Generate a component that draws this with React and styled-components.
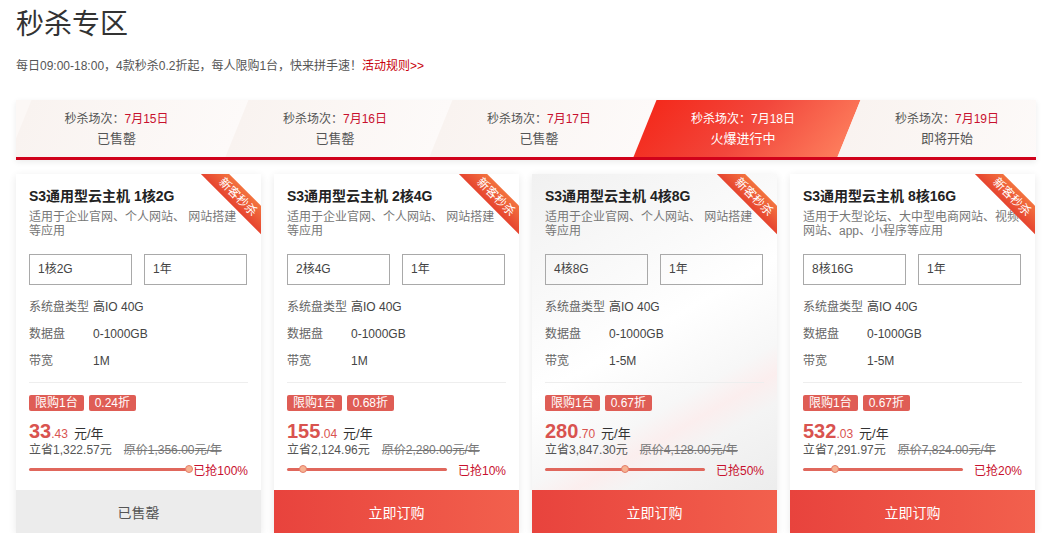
import React from 'react';
import styled, { createGlobalStyle, css } from 'styled-components';

const FONT = `"Liberation Sans", "Noto Sans CJK SC", sans-serif`;

const sessions = [
  { date: '7月15日', status: '已售罄' },
  { date: '7月16日', status: '已售罄' },
  { date: '7月17日', status: '已售罄' },
  { date: '7月18日', status: '火爆进行中', active: true },
  { date: '7月19日', status: '即将开始' },
];

const DESC_A = '适用于企业官网、个人网站、 网站搭建等应用';
const DESC_B = '适用于大型论坛、大中型电商网站、视频网站、app、小程序等应用';

const products = [
  { spec: '1核2G', desc: DESC_A, bw: '1M', discount: '0.24折', int: '33', dec: '.43', save: '1,322.57', orig: '1,356.00', pct: 100, soldOut: true },
  { spec: '2核4G', desc: DESC_A, bw: '1M', discount: '0.68折', int: '155', dec: '.04', save: '2,124.96', orig: '2,280.00', pct: 10 },
  { spec: '4核8G', desc: DESC_A, bw: '1-5M', discount: '0.67折', int: '280', dec: '.70', save: '3,847.30', orig: '4,128.00', pct: 50, decorated: true },
  { spec: '8核16G', desc: DESC_B, bw: '1-5M', discount: '0.67折', int: '532', dec: '.03', save: '7,291.97', orig: '7,824.00', pct: 20 },
];

const App = () => {
  return (
    <Page>
      <GlobalStyle />
      <Title>秒杀专区</Title>
      <Intro>
        每日09:00-18:00，4款秒杀0.2折起，每人限购1台，快来拼手速！
        <RuleLink href="#">活动规则&gt;&gt;</RuleLink>
      </Intro>

      <SessionBar>
        {sessions.map((s, i) => (
          <Session key={s.date} $active={s.active} $first={i === 0}>
            <SessionLine>
              秒杀场次：<SessionDate $active={s.active}>{s.date}</SessionDate>
            </SessionLine>
            <SessionStatus>{s.status}</SessionStatus>
          </Session>
        ))}
      </SessionBar>

      <CardGrid>
        {products.map(p => (
          <Card key={p.spec} $decorated={p.decorated}>
            <Ribbon>
              <RibbonBand>新客秒杀</RibbonBand>
            </Ribbon>
            <CardBody>
              <CardTitle>S3通用型云主机 {p.spec}</CardTitle>
              <CardDesc>{p.desc}</CardDesc>
              <SelectRow>
                <SelectBox>{p.spec}</SelectBox>
                <SelectBox>1年</SelectBox>
              </SelectRow>
              <SpecList>
                <SpecRow>
                  <SpecLabel>系统盘类型</SpecLabel>
                  <SpecValue>高IO 40G</SpecValue>
                </SpecRow>
                <SpecRow>
                  <SpecLabel>数据盘</SpecLabel>
                  <SpecValue>0-1000GB</SpecValue>
                </SpecRow>
                <SpecRow>
                  <SpecLabel>带宽</SpecLabel>
                  <SpecValue>{p.bw}</SpecValue>
                </SpecRow>
              </SpecList>
              <Divider />
              <TagRow>
                <Tag>限购1台</Tag>
                <Tag>{p.discount}</Tag>
              </TagRow>
              <PriceRow>
                <PriceInt>{p.int}</PriceInt>
                <PriceDec>{p.dec}</PriceDec>
                <PriceUnit>元/年</PriceUnit>
              </PriceRow>
              <SaveRow>
                <span>立省{p.save}元</span>
                <Original>原价{p.orig}元/年</Original>
              </SaveRow>
              <ProgressRow>
                <Track>
                  <Thumb style={{ left: `${p.pct}%` }} />
                </Track>
                <Sold>已抢{p.pct}%</Sold>
              </ProgressRow>
            </CardBody>
            <BuyButton $soldOut={p.soldOut}>{p.soldOut ? '已售罄' : '立即订购'}</BuyButton>
          </Card>
        ))}
      </CardGrid>
    </Page>
  );
};

export default App;

const GlobalStyle = createGlobalStyle`
  body {
    margin: 0;
    background: #fff;
    font-family: ${FONT};
  }
`;

const Page = styled.div`
  width: 1020px;
  padding: 7px 16px 0;
`;

const Title = styled.h1`
  margin: 0;
  font-size: 28px;
  line-height: 36px;
  font-weight: normal;
  color: #333;
`;

const Intro = styled.p`
  margin: 14px 0 0;
  font-size: 12px;
  line-height: 18px;
  color: #555;
`;

const RuleLink = styled.a`
  color: #c7000b;
  text-decoration: none;
`;

const SessionBar = styled.div`
  margin-top: 25px;
  display: grid;
  grid-template-columns: 217px repeat(4, 204px);
  height: 57px;
  overflow: hidden;
  background: #fcf8f6;
  border-bottom: 3px solid #d0021b;
  box-shadow: 0 2px 6px rgba(0, 0, 0, 0.08);
`;

const Session = styled.div`
  position: relative;
  display: flex;
  flex-direction: column;
  justify-content: center;
  align-items: center;
  font-size: 12px;
  color: #555;
  padding-right: ${({ $first }) => ($first ? '16px' : '0')};

  &::before {
    content: '';
    position: absolute;
    top: 0;
    bottom: 0;
    left: 4px;
    right: -4px;
    transform: skewX(-22deg);
    background: linear-gradient(90deg, #f9f3f0 0%, #fdfaf9 100%);
    z-index: 0;
  }

  ${({ $active }) =>
    $active &&
    css`
      color: #fff;
      &::before {
        background: linear-gradient(115deg, #f42a1c 0%, #f2473c 50%, #fd7d5c 100%);
      }
    `}

  & > * {
    position: relative;
    z-index: 1;
  }
`;

const SessionLine = styled.div`
  line-height: 20px;
`;

const SessionDate = styled.span`
  color: ${({ $active }) => ($active ? '#fff' : '#c8102e')};
`;

const SessionStatus = styled.div`
  line-height: 20px;
  font-size: 13px;
  color: inherit;
`;

const CardGrid = styled.div`
  margin-top: 14px;
  display: grid;
  grid-template-columns: repeat(4, 245px);
  gap: 13px;
`;

const Card = styled.div`
  position: relative;
  display: flex;
  flex-direction: column;
  height: 359px;
  overflow: hidden;
  background: ${({ $decorated }) =>
    $decorated
      ? 'linear-gradient(150deg, #f1f1f1 0%, #fafafa 30%, #ffffff 45%, #f7f7f7 62%, #fbeeee 68%, #f4f4f4 74%, #e9e9e9 100%)'
      : '#fff'};
  box-shadow: 0 2px 8px rgba(0, 0, 0, 0.09);
`;

const Ribbon = styled.div`
  position: absolute;
  top: 0;
  right: 0;
  width: 62px;
  height: 62px;
  overflow: hidden;
  z-index: 2;
`;

const RibbonBand = styled.div`
  position: absolute;
  top: 13px;
  right: -22px;
  width: 90px;
  height: 20px;
  transform: rotate(45deg);
  background: linear-gradient(180deg, #f3733f 0%, #e6442f 100%);
  color: #fff;
  font-size: 12px;
  line-height: 20px;
  text-align: center;
`;

const CardBody = styled.div`
  flex: 1;
  padding: 12px 13px 0;
`;

const CardTitle = styled.div`
  font-size: 14px;
  line-height: 20px;
  font-weight: bold;
  color: #222;
`;

const CardDesc = styled.div`
  margin-top: 4px;
  height: 28px;
  font-size: 12px;
  line-height: 14px;
  color: #777;
`;

const SelectRow = styled.div`
  margin-top: 16px;
  display: flex;
  gap: 12px;
`;

const SelectBox = styled.div`
  box-sizing: border-box;
  width: 103px;
  height: 31px;
  padding-left: 8px;
  border: 1px solid #a9a9a9;
  font-size: 12px;
  line-height: 29px;
  color: #444;
`;

const SpecList = styled.div`
  margin-top: 9px;
`;

const SpecRow = styled.div`
  display: flex;
  font-size: 12px;
  line-height: 27px;
`;

const SpecLabel = styled.span`
  width: 64px;
  color: #666;
`;

const SpecValue = styled.span`
  color: #444;
`;

const Divider = styled.div`
  margin-top: 7px;
  height: 1px;
  background: #eee;
`;

const TagRow = styled.div`
  margin-top: 12px;
  display: flex;
  gap: 5px;
`;

const Tag = styled.span`
  height: 16px;
  padding: 0 6px;
  border-radius: 2px;
  background: #df5d55;
  color: #fff;
  font-size: 12px;
  line-height: 16px;
`;

const PriceRow = styled.div`
  margin-top: 9px;
  display: flex;
  align-items: baseline;
  height: 22px;
  line-height: 22px;
`;

const PriceInt = styled.span`
  font-size: 20px;
  font-weight: bold;
  color: #d9534f;
`;

const PriceDec = styled.span`
  font-size: 12px;
  color: #d9534f;
`;

const PriceUnit = styled.span`
  margin-left: 6px;
  font-size: 13px;
  color: #333;
`;

const SaveRow = styled.div`
  display: flex;
  gap: 12px;
  font-size: 12px;
  line-height: 16px;
  color: #555;
`;

const Original = styled.span`
  color: #777;
  text-decoration: line-through;
`;

const ProgressRow = styled.div`
  margin-top: 4px;
  display: flex;
  align-items: center;
  height: 14px;
`;

const Track = styled.div`
  position: relative;
  flex-shrink: 0;
  width: 160px;
  height: 3px;
  border-radius: 2px;
  background: #e0675c;
`;

const Thumb = styled.span`
  position: absolute;
  top: 50%;
  width: 8px;
  height: 8px;
  box-sizing: border-box;
  border-radius: 50%;
  border: 1px solid #e57c68;
  background: #f6b393;
  transform: translate(-50%, -50%);
`;

const Sold = styled.span`
  margin-left: auto;
  font-size: 12px;
  color: #c8102e;
  white-space: nowrap;
`;

const BuyButton = styled.button`
  height: 43px;
  border: none;
  font-family: ${FONT};
  font-size: 14px;
  cursor: pointer;
  ${({ $soldOut }) =>
    $soldOut
      ? css`
          background: #ececec;
          color: #555;
        `
      : css`
          background: linear-gradient(90deg, #e8433d 0%, #f2604d 100%);
          color: #fff;
        `}
`;
